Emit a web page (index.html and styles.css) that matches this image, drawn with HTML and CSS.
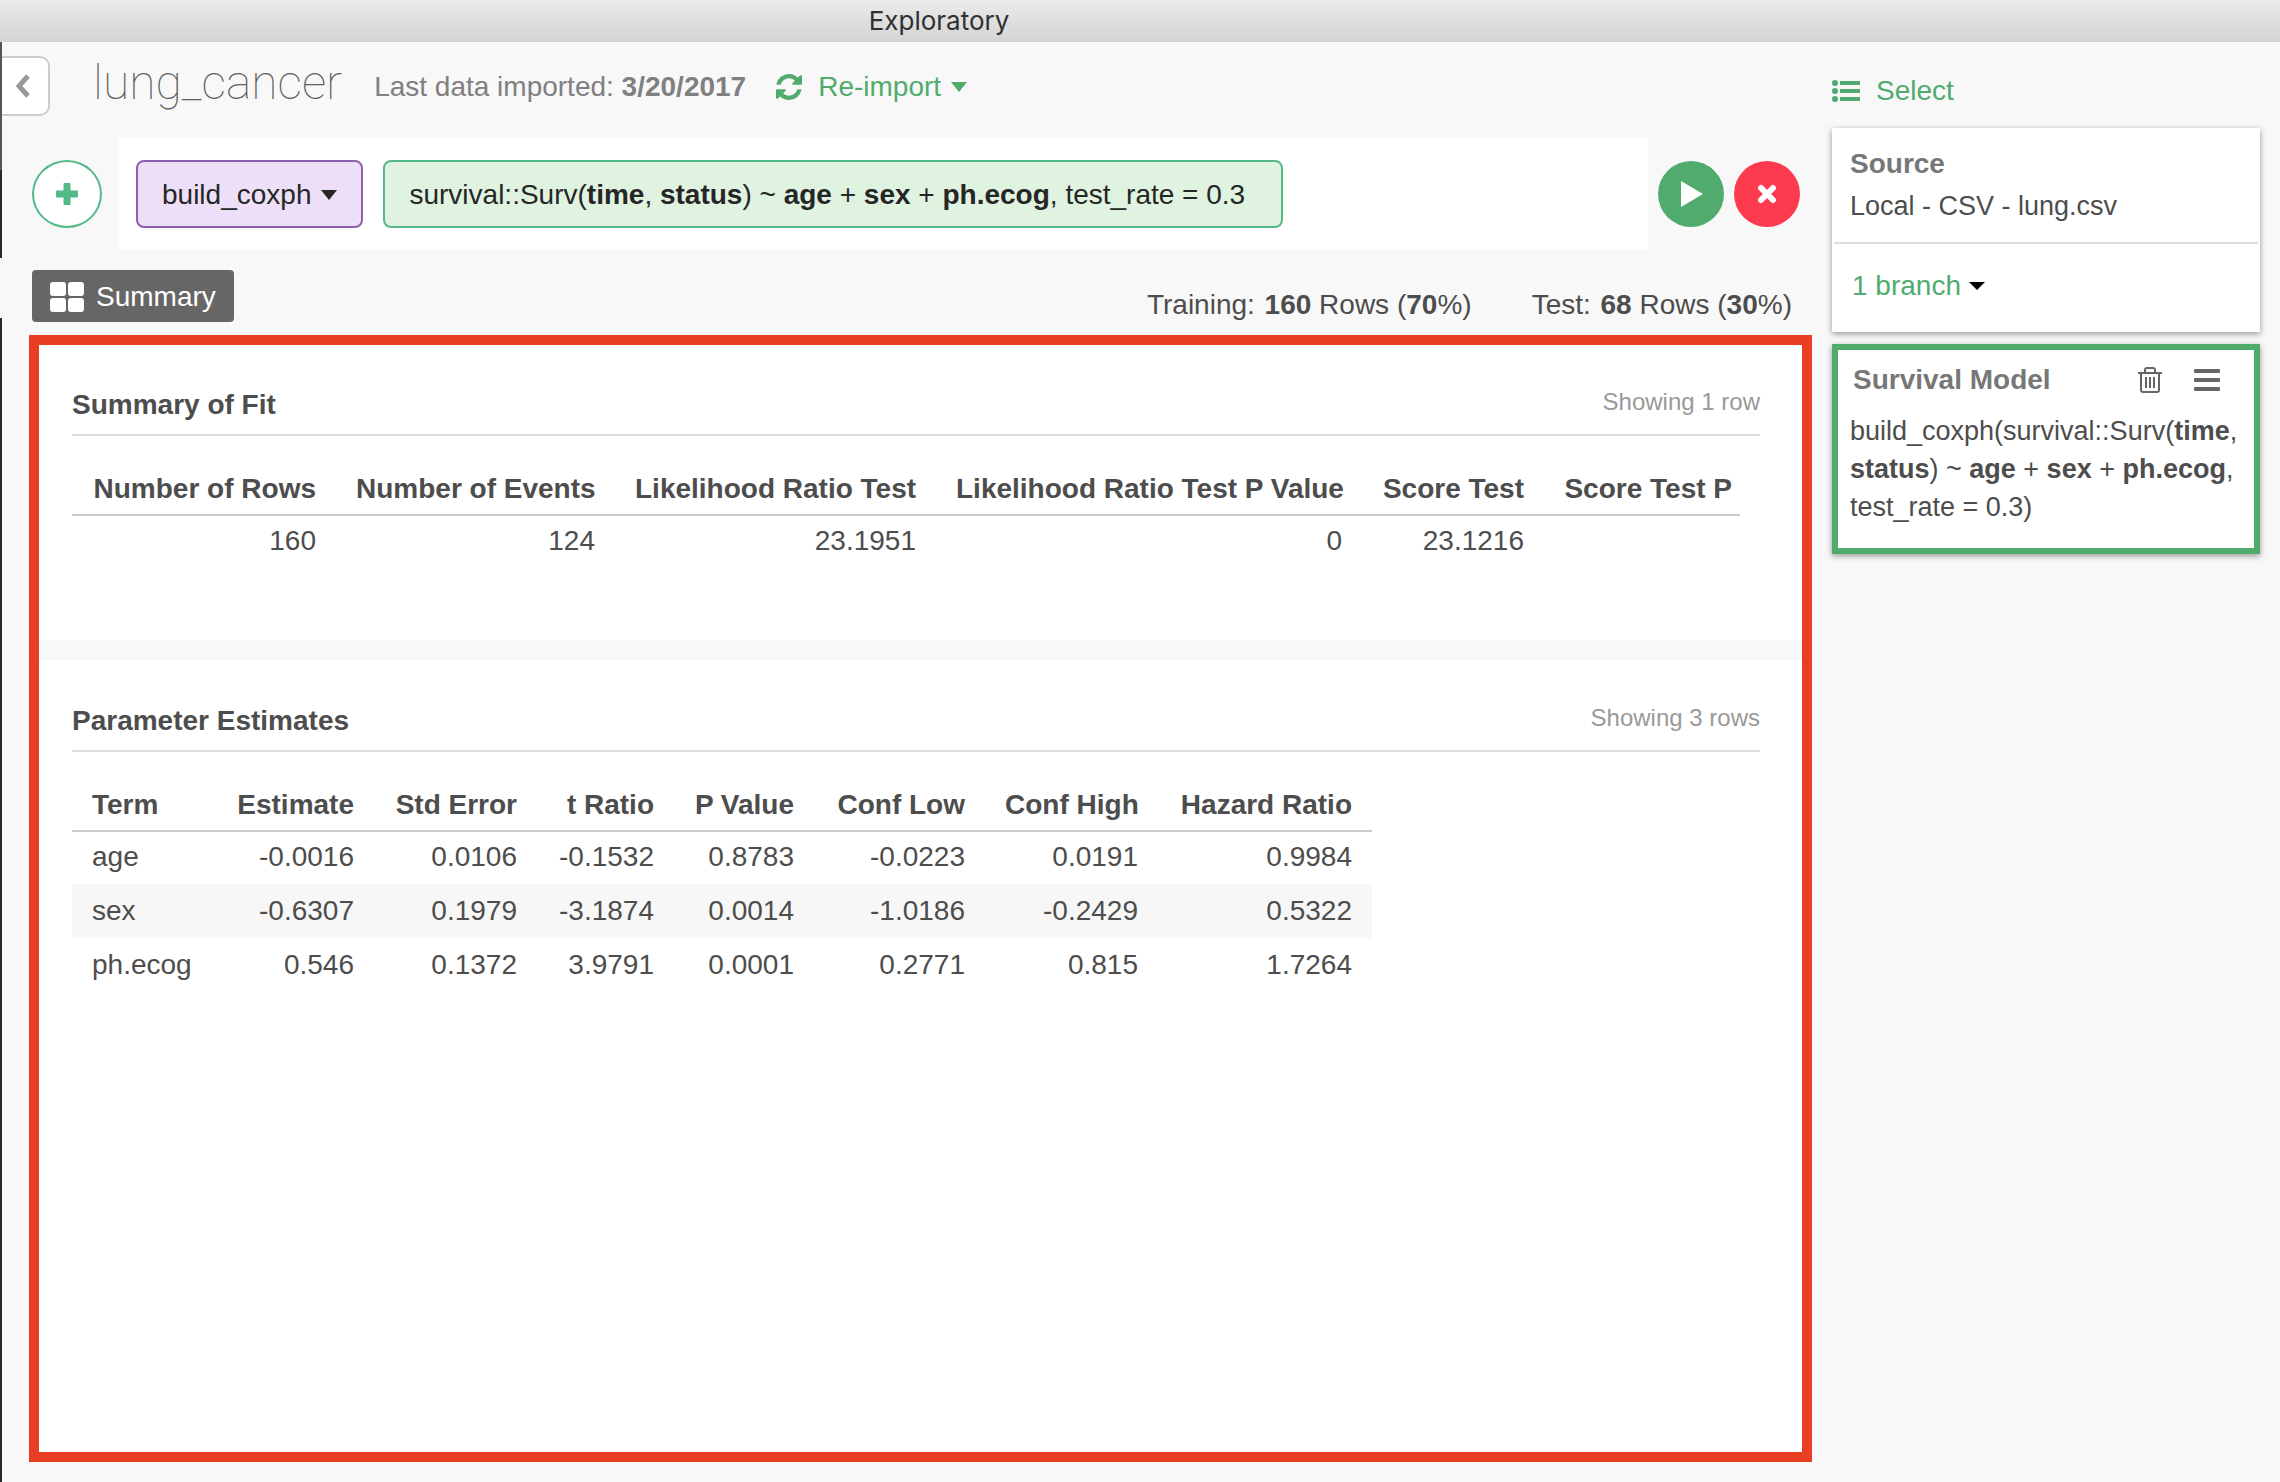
FILE: index.html
```html
<!DOCTYPE html>
<html lang="en">
<head>
<meta charset="utf-8">
<title>Exploratory</title>
<link rel="stylesheet" href="styles.css">
</head>
<body>
<header class="titlebar">Exploratory</header>
<div class="app">
  <div class="rail"></div>
  <main class="workspace">
    <div class="frame-header">
      <button class="back" type="button" aria-label="Back">
        <svg width="18" height="24" viewBox="0 0 18 24"><path d="M14 2 5 12l9 10" fill="none" stroke="#999" stroke-width="5"/></svg>
      </button>
      <h1 class="frame-name">lung_cancer</h1>
      <p class="imported">Last data imported: <b>3/20/2017</b></p>
      <button class="link-button reimport" type="button">
        <svg class="refresh" width="26" height="26" viewBox="0 0 1536 1536"><path fill="currentColor" d="M1511 928q0 5-1 7-64 268-268 434.500T764 1536q-146 0-282.500-55T238 1324l-129 129q-19 19-45 19t-45-19-19-45V960q0-26 19-45t45-19h448q26 0 45 19t19 45-19 45l-137 137q71 66 161 102t187 36q134 0 250-65t186-179q11-17 53-117 8-23 30-23h192q13 0 22.500 9.500t9.500 22.500zm25-800v448q0 26-19 45t-45 19h-448q-26 0-45-19t-19-45 19-45l138-138Q969 256 768 256q-134 0-250 65T332 500q-11 17-53 117-8 23-30 23H50q-13 0-22.500-9.500T18 608v-7q65-268 270-434.500T768 0q146 0 284 55.500T1297 212l130-129q19-19 45-19t45 19 19 45z"/></svg>
        <span>Re-import</span>
        <svg class="caret" width="16" height="10" viewBox="0 0 16 10"><path fill="currentColor" d="M0 0h16L8 10z"/></svg>
      </button>
    </div>

    <div class="toolbar">
      <button class="round add" type="button" aria-label="Add step">
        <svg width="24" height="24" viewBox="0 0 24 24"><path d="M9.500 1h5a1 1 0 0 1 1 1v6.500H22a1 1 0 0 1 1 1v5a1 1 0 0 1-1 1h-6.500V22a1 1 0 0 1-1 1h-5a1 1 0 0 1-1-1v-6.500H2a1 1 0 0 1-1-1v-5a1 1 0 0 1 1-1h6.500V2a1 1 0 0 1 1-1z" fill="currentColor"/></svg>
      </button>
      <div class="command">
        <button class="token token-verb" type="button">build_coxph
          <svg width="16" height="10" viewBox="0 0 16 10"><path fill="currentColor" d="M0 0h16L8 10z"/></svg>
        </button>
        <button class="token token-args" type="button"><span>survival::Surv(<b>time</b>, <b>status</b>) ~ <b>age</b> + <b>sex</b> + <b>ph.ecog</b>, test_rate = 0.3</span></button>
      </div>
      <div class="actions">
        <button class="round run" type="button" aria-label="Run">
          <svg width="22" height="26" viewBox="0 0 22 26"><path d="M0 0v26l22-13z" fill="#fff"/></svg>
        </button>
        <button class="round cancel" type="button" aria-label="Cancel">
          <svg width="20" height="20" viewBox="0 0 20 20"><path d="M4 4l12 12M16 4 4 16" stroke="#fff" stroke-width="6" stroke-linecap="round"/></svg>
        </button>
      </div>
    </div>

    <div class="status">
      <button class="tab" type="button">
        <svg width="34" height="30" viewBox="0 0 34 30"><g fill="#fff"><rect width="16" height="14" rx="3"/><rect x="18" width="16" height="14" rx="3"/><rect y="16" width="16" height="14" rx="3"/><rect x="18" y="16" width="16" height="14" rx="3"/></g></svg>
        Summary
      </button>
      <div class="split">
        <span>Training: <b>160</b> Rows (<b>70</b>%)</span>
        <span>Test: <b>68</b> Rows (<b>30</b>%)</span>
      </div>
    </div>

    <div class="report">
      <section class="section">
        <div class="section-head"><h2>Summary of Fit</h2><span class="count">Showing 1 row</span></div>
        <div class="table-wrap">
          <table class="fit">
            <colgroup><col class="w264"><col class="w279"><col class="w321"><col class="w426"><col class="w182"><col></colgroup>
            <thead><tr><th>Number of Rows</th><th>Number of Events</th><th>Likelihood Ratio Test</th><th>Likelihood Ratio Test P Value</th><th>Score Test</th><th class="flush">Score Test P</th></tr></thead>
            <tbody><tr><td>160</td><td>124</td><td>23.1951</td><td>0</td><td>23.1216</td><td></td></tr></tbody>
          </table>
        </div>
      </section>
      <section class="section section-last">
        <div class="section-head"><h2>Parameter Estimates</h2><span class="count">Showing 3 rows</span></div>
        <div class="table-wrap">
          <table class="estimates">
            <colgroup><col class="w144"><col class="w158"><col class="w163"><col class="w137"><col class="w140"><col class="w171"><col class="w173"><col class="w214"></colgroup>
            <thead><tr><th class="term">Term</th><th>Estimate</th><th>Std Error</th><th>t Ratio</th><th>P Value</th><th>Conf Low</th><th>Conf High</th><th>Hazard Ratio</th></tr></thead>
            <tbody>
              <tr><td class="term">age</td><td>-0.0016</td><td>0.0106</td><td>-0.1532</td><td>0.8783</td><td>-0.0223</td><td>0.0191</td><td>0.9984</td></tr>
              <tr><td class="term">sex</td><td>-0.6307</td><td>0.1979</td><td>-3.1874</td><td>0.0014</td><td>-1.0186</td><td>-0.2429</td><td>0.5322</td></tr>
              <tr><td class="term">ph.ecog</td><td>0.546</td><td>0.1372</td><td>3.9791</td><td>0.0001</td><td>0.2771</td><td>0.815</td><td>1.7264</td></tr>
            </tbody>
          </table>
        </div>
      </section>
    </div>
  </main>

  <aside class="steps">
    <button class="link-button select" type="button">
      <svg width="28" height="22" viewBox="0 0 28 22"><g fill="currentColor"><circle cx="3" cy="3" r="3"/><circle cx="3" cy="11" r="3"/><circle cx="3" cy="19" r="3"/><path d="M8 1h20v4H8zM8 9h20v4H8zM8 17h20v4H8z"/></g></svg>
      Select
    </button>
    <div class="card source">
      <div class="source-info">
        <h3>Source</h3>
        <p>Local - CSV - lung.csv</p>
      </div>
      <div class="branches">
        <button class="link-button branch" type="button">1 branch
          <svg width="16" height="8" viewBox="0 0 16 8"><path fill="#000" d="M0 0h16L8 8z"/></svg>
        </button>
      </div>
    </div>
    <div class="card model">
      <div class="model-head">
        <h3>Survival Model</h3>
        <button class="icon-button" type="button" aria-label="Delete">
          <svg width="24" height="26" viewBox="0 0 24 26" fill="none" stroke="#666" stroke-width="2"><path d="M0 6h24M3 6v17q0 2 2 2h14q2 0 2-2V6M7 5V3q0-2 2-2h6q2 0 2 2v2M8 10v11M12 10v11M16 10v11"/></svg>
        </button>
        <button class="icon-button" type="button" aria-label="Menu">
          <svg width="26" height="22" viewBox="0 0 26 22" fill="#666"><rect width="26" height="4" rx="1"/><rect y="9" width="26" height="4" rx="1"/><rect y="18" width="26" height="4" rx="1"/></svg>
        </button>
      </div>
      <p>build_coxph(survival::Surv(<b>time</b>, <b>status</b>) ~ <b>age</b> + <b>sex</b> + <b>ph.ecog</b>, test_rate = 0.3)</p>
    </div>
  </aside>
</div>
</body>
</html>
```
FILE: styles.css
```css
* { box-sizing: border-box; }

body {
  margin: 0;
  min-height: 100vh;
  display: flex;
  flex-direction: column;
  background: #f8f8f8;
  color: #4d4d4d;
  font: 28px/32px "Liberation Sans", Arial, sans-serif;
}

h1, h2, h3, p { margin: 0; font-size: inherit; }
svg { display: block; flex: none; }

button {
  padding: 0;
  border: 0;
  background: none;
  color: inherit;
  font: inherit;
  display: flex;
  align-items: center;
  white-space: nowrap;
}

.titlebar {
  height: 42px;
  padding-right: 402px;
  background: linear-gradient(#ebebeb, #d3d3d3);
  color: #303030;
  font: 26px/42px Inter, sans-serif;
  text-align: center;
}

.app { flex: 1; display: flex; }

.rail {
  flex: none;
  width: 2px;
  background: linear-gradient(#555 128px, #2a2a2a 128px 216px, #f8f8f8 216px 276px, #2a2a2a 276px);
}

.workspace {
  flex: 1;
  min-width: 0;
  display: flex;
  flex-direction: column;
}

.frame-header {
  height: 96px;
  padding: 14px 0 22px;
  display: flex;
  align-items: center;
  color: #808080;
}
.back {
  width: 48px;
  height: 60px;
  justify-content: center;
  padding-right: 4px;
  background: #fff;
  border: 2px solid #ccc;
  border-left: 0;
  border-radius: 0 10px 10px 0;
}
.frame-name {
  margin-left: 43px;
  padding-bottom: 6px;
  font: 100 48px/56px Roboto, sans-serif;
  color: #606060;
}
.imported { margin-left: 32px; padding-top: 2px; }
.link-button { color: #50ab6d; }
.reimport { margin-left: 30px; padding-top: 2px; }
.reimport .caret { margin-left: 10px; }
.refresh { margin-right: 16px; }

.toolbar {
  height: 112px;
  padding: 0 12px 0 30px;
  display: flex;
  align-items: center;
}
.round {
  flex: none;
  width: 66px;
  height: 66px;
  border-radius: 50%;
  justify-content: center;
}
.add {
  width: 70px;
  height: 68px;
  background: #fff;
  border: 2px solid #53b987;
  color: #53b987;
}
.command {
  flex: 1;
  height: 112px;
  margin: 0 10px 0 16px;
  padding: 0 18px;
  display: flex;
  align-items: center;
  gap: 20px;
  background: #fff;
}
.token {
  height: 68px;
  padding: 2px 24px 0;
  border: 2px solid;
  border-radius: 8px;
}
.token-verb {
  gap: 10px;
  background: #eedff8;
  border-color: #8e5fb0;
  color: #262626;
}
.token-args {
  padding-right: 36px;
  background: #dff3e0;
  border-color: #55b987;
  color: #262626;
}
.actions { display: flex; gap: 10px; }
.run { padding-left: 2px; background: #50ab6d; }
.cancel { background: #fd3a4e; }

.status {
  height: 85px;
  padding: 20px 20px 0 30px;
  display: flex;
  align-items: flex-start;
  justify-content: space-between;
}
.tab {
  height: 52px;
  padding: 2px 18px 0;
  gap: 12px;
  background: #666;
  border-radius: 4px;
  color: #fff;
}
.split {
  display: flex;
  gap: 60px;
  padding-top: 19px;
}
.split b:first-child { margin-left: 2px; }

.report {
  flex: 1;
  margin: 0 0 20px 27px;
  display: flex;
  flex-direction: column;
  gap: 20px;
  border: 10px solid #ea3e24;
}
.section {
  padding: 43px 42px 72px 33px;
  background: #fff;
}
.section-last { flex: 1; padding-top: 44px; }
.section-head {
  display: flex;
  align-items: flex-start;
  justify-content: space-between;
  padding-bottom: 12px;
  border-bottom: 2px solid #ddd;
}
.section-head h2 { line-height: 34px; }
.count { font-size: 24px; line-height: 28px; color: #999; }

.table-wrap { margin: 37px 20px 0 0; }
table { table-layout: fixed; border-collapse: separate; border-spacing: 0; }
.fit { width: 100%; }
.estimates { width: 1300px; }
th, td { padding: 11px 20px; text-align: right; white-space: nowrap; }
th { padding-top: 0; padding-bottom: 9px; border-bottom: 2px solid #ccc; }
.flush { padding-right: 8px; }
tbody tr:first-child td { padding-top: 9px; }
tbody tr:nth-child(even) { background: #f7f7f7; }
.term { text-align: left; }
.w137 { width: 137px; }
.w140 { width: 140px; }
.w144 { width: 144px; }
.w158 { width: 158px; }
.w163 { width: 163px; }
.w171 { width: 171px; }
.w173 { width: 173px; }
.w182 { width: 182px; }
.w214 { width: 214px; }
.w264 { width: 264px; }
.w279 { width: 279px; }
.w321 { width: 321px; }
.w426 { width: 426px; }

.steps {
  flex: none;
  width: 428px;
  margin: 33px 20px 0;
}
.select { gap: 16px; }
.card {
  background: #fff;
  box-shadow: 0 2px 6px rgba(0, 0, 0, .4);
}
.card h3 { color: #777; }
.card p { font-size: 27px; line-height: 38px; }
.source { margin: 21px 0 12px; padding: 0 2px; }
.source-info {
  padding: 20px 16px 17px;
  border-bottom: 2px solid #ddd;
}
.source-info p { margin-top: 7px; }
.branches { padding: 26px 18px 30px; }
.branch { gap: 8px; }
.model { padding: 14px 12px 22px; border: 6px solid #50ab6d; }
.model-head {
  display: flex;
  align-items: center;
  padding: 0 22px 0 3px;
  margin-bottom: 16px;
}
.model-head h3 { flex: 1; }
.icon-button + .icon-button { margin-left: 32px; }
```
